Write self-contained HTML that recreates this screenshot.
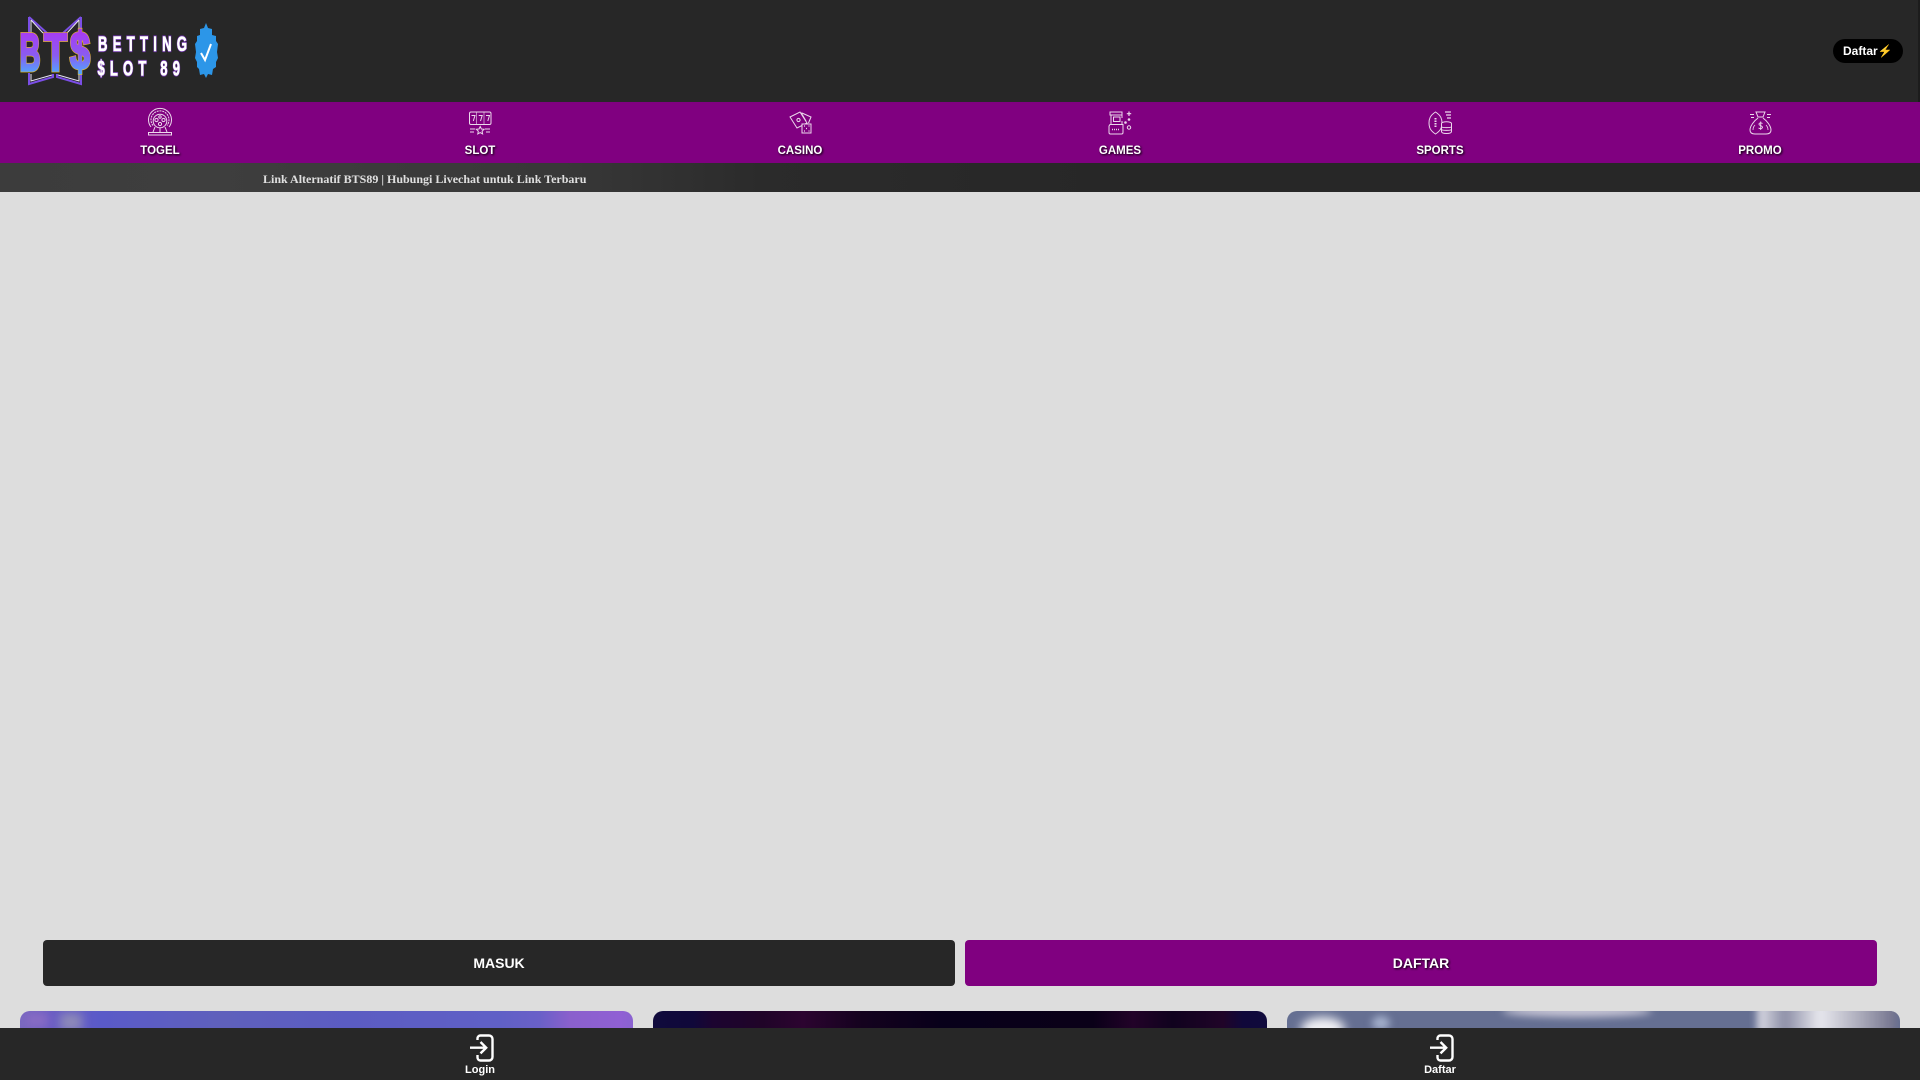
<!DOCTYPE html>
<html lang="id">
<head>
<meta charset="utf-8">
<title>BTS89</title>
<style>
html,body{margin:0;padding:0;width:1920px;height:1080px;overflow:hidden;background:#ddd;font-family:"Liberation Sans",Arial,sans-serif;}
.a{position:absolute;}
#hdr{left:0;top:0;width:1918px;height:102px;background:#272727;}
#edge{left:1918px;top:0;width:2px;height:102px;background:#1c1c1c;}
#pill{left:1833px;top:39px;width:70px;height:24px;border-radius:12px;background:#000;color:#fff;font-size:12px;font-weight:bold;line-height:24px;white-space:nowrap;}
#pill span{position:absolute;left:10px;top:0;}
#nav{left:0;top:102px;width:1920px;height:61px;background:#800080;}
.lab{position:absolute;top:143px;width:320px;text-align:center;color:#fff;font-size:11.5px;font-weight:bold;line-height:16px;text-shadow:1px 1px 2px #000;}
.ic{position:absolute;top:107px;width:30px;height:30px;fill:none;stroke:#fff;stroke-width:1;opacity:.85;}
#mq{left:0;top:163px;width:1920px;height:29px;background:linear-gradient(90deg,#3c3c3c 0,#3e3e3e 200px,#383838 560px,#2b2b2b 760px,#272727 1100px,#272727 100%);}
#mqt{left:263px;top:170px;color:#e0e0e0;font:bold 12px/18px "Liberation Serif",serif;white-space:nowrap;}
.btn{position:absolute;top:940px;height:46px;border-radius:4px;color:#fff;text-align:center;font-size:14px;font-weight:bold;line-height:46px;}
.card{position:absolute;top:1011px;height:60px;border-radius:10px;overflow:hidden;}
#bar{left:0;top:1028px;width:1920px;height:52px;background:#272727;}
.bl{position:absolute;top:1062px;width:120px;text-align:center;color:#fff;font-size:11px;font-weight:bold;line-height:16px;}
.door{position:absolute;top:1030px;width:34px;height:36px;fill:none;stroke:#fff;stroke-width:2.4;}
</style>
</head>
<body>
<div class="a" id="hdr"></div>
<div class="a" id="edge"></div>

<svg class="a" style="left:0;top:0" width="240" height="102" viewBox="0 0 240 102">
<defs>
<linearGradient id="g" x1="0" y1="33" x2="0" y2="74" gradientUnits="userSpaceOnUse">
<stop offset="0" stop-color="#a63df2"/><stop offset=".55" stop-color="#8a5cf0"/><stop offset="1" stop-color="#4fa8ff"/>
</linearGradient>
</defs>
<g fill="none" stroke-linejoin="miter">
<path d="M29 17V33M29 17L47 33M81 17V33M81 17L63 33M29 73V84L53 77V74M81 73V84L57 77V74" stroke="#7b4ee6" stroke-width="2"/>
<path d="M31 20L43 33M31 20V33M79 20L67 33M79 20V33M31 74V81L52 75M79 74V81L58 75" stroke="#e8e4f5" stroke-width="1"/>
</g>
<g font-family="'Liberation Sans',sans-serif" font-weight="bold" fill="#f2c21a" stroke="#f2c21a" stroke-width="3.800" stroke-linejoin="miter">
<text x="19.500" y="70.500" font-size="53" textLength="21" lengthAdjust="spacingAndGlyphs">B</text>
<text x="44" y="70.500" font-size="53" textLength="23" lengthAdjust="spacingAndGlyphs">T</text>
<text x="70" y="69" font-size="53" textLength="20" lengthAdjust="spacingAndGlyphs">$</text>
</g>
<g font-family="'Liberation Sans',sans-serif" font-weight="bold" fill="url(#g)" stroke="url(#g)" stroke-width="2.600" stroke-linejoin="miter">
<text x="19.500" y="70.500" font-size="53" textLength="21" lengthAdjust="spacingAndGlyphs">B</text>
<text x="44" y="70.500" font-size="53" textLength="23" lengthAdjust="spacingAndGlyphs">T</text>
<text x="70" y="69" font-size="53" textLength="20" lengthAdjust="spacingAndGlyphs">$</text>
</g>
<g font-family="'Liberation Sans',sans-serif" font-weight="bold" fill="#fff" stroke="#6b2fa8" stroke-width="2.200" style="paint-order:stroke" font-size="21">
<text transform="translate(98 51) scale(.62 1)" textLength="143.500">BETTING</text>
<text transform="translate(97.500 75.500) scale(.62 1)" textLength="133">$LOT 89</text>
</g>
<g font-family="'Liberation Sans',sans-serif" font-weight="bold" fill="#fff" stroke="#fff" stroke-width=".6" font-size="21">
<text transform="translate(98 51) scale(.62 1)" textLength="143.500">BETTING</text>
<text transform="translate(97.500 75.500) scale(.62 1)" textLength="133">$LOT 89</text>
</g>
<polygon fill="#2c96e8" points="206,23 208,28 212,29 212,35 216,36 216,41 218,44 217,52 218,58 216,62 216,67 213,69 212,75 208,74 206,78 204,74 200,75 199,69 197,67 197,62 195,58 196,52 195,44 197,41 197,36 200,35 200,29 204,28"/>
<path d="M201 53L205 60L211 44" fill="none" stroke="#fff" stroke-width="2"/>
</svg>

<div class="a" id="pill"><span>Daftar⚡</span></div>

<div class="a" id="nav"></div>

<!-- TOGEL -->
<svg class="ic" style="left:145px" viewBox="0 0 30 30">
<path d="M6 20A11.500 11.500 0 1 1 24 20"/><path d="M8 18.500A9 9 0 1 1 22 18.500" stroke-dasharray="2 .8"/>
<circle cx="15" cy="14" r="6.800"/><circle cx="11.500" cy="13" r="1.600"/><circle cx="18.500" cy="13" r="1.600"/><circle cx="15" cy="17" r="1.600"/><circle cx="15" cy="10" r="1.200"/>
<path d="M10 20L8 25M20 20L22 25M15 21V25"/><rect x="3.500" y="25.500" width="23" height="2.500"/>
</svg>
<!-- SLOT -->
<svg class="ic" style="left:465px" viewBox="0 0 30 30">
<rect x="4.500" y="5" width="21.500" height="12.500" rx="1.500"/>
<path d="M11.500 5V17.500M19 5V17.500" stroke-width=".6"/>
<path d="M6.500 8.500H10L8.300 14M13.700 8.500H17.200L15.500 14M21 8.500H24.500L22.800 14"/>
<path d="M15.200 19.500l1.200 2.500 2.700.3-2 1.900.5 2.700-2.400-1.300-2.400 1.300.5-2.700-2-1.900 2.700-.3z"/>
<path d="M5 22H10M20 22H25M5 25H9M21 25H25"/>
</svg>
<!-- CASINO -->
<svg class="ic" style="left:785px" viewBox="0 0 30 30">
<path d="M5 10L15 5L22 16L12 21Z"/><path d="M17 6L26 10L23.500 16M16 5.500L21 14"/>
<circle cx="13.500" cy="13" r="1.600"/>
<rect x="17" y="17" width="9" height="9" fill="#800080"/>
<path d="M19 19h1M23.500 19h1M21 21.500h1M19 24h1M23.500 24h1" stroke-width="1.200"/>
</svg>
<!-- GAMES -->
<svg class="ic" style="left:1105px" viewBox="0 0 30 30">
<path d="M5 5H17V8H5Z"/><path d="M6 8V17M17 8V11M17 14V17"/>
<rect x="8.500" y="10" width="6.500" height="4.500"/>
<path d="M5 17.500H18V25.500a1.500 1.500 0 0 1-1.500 1.500H5.500a1.500 1.500 0 0 1-1.500-1.500V19Z"/>
<path d="M7 22.500H15" stroke-dasharray="1 1" stroke-width="1.400"/>
<path d="M24 4.500V9M21.800 6.700H26.200" stroke-width="1.200"/>
<circle cx="24" cy="12.500" r=".8" fill="#fff"/><circle cx="20.500" cy="15.500" r=".8" fill="#fff"/><circle cx="24" cy="20.500" r="1.700"/>
</svg>
<!-- SPORTS -->
<svg class="ic" style="left:1425px" viewBox="0 0 30 30">
<path d="M10.500 5C5 8.500 4 12 4 16S5 23.500 10.500 27C16 23.500 17 20 17 16S16 8.500 10.500 5Z"/>
<path d="M10.500 11V21" stroke-width="2" stroke-dasharray="1.500 1"/>
<path d="M20 5H26M21 8H26M22 11H26" stroke-width="1.300"/>
<ellipse cx="21.500" cy="16.500" rx="5" ry="1.800" fill="#800080"/>
<path d="M16.500 16.500V24.500C16.500 26 19 26.500 21.500 26.500S26.500 26 26.500 24.500V16.500M16.500 19.500C16.500 21 26.500 21 26.500 19.500M16.500 22.200C16.500 23.700 26.500 23.700 26.500 22.200" fill="#800080"/>
</svg>
<!-- PROMO -->
<svg class="ic" style="left:1745px" viewBox="0 0 30 30">
<path d="M11 5H20L18 10H13Z"/><path d="M12.500 10H18.500"/>
<path d="M13 11C9 14 5 19 5 23C5 26 7.500 27 10 27H21C23.500 27 26 26 26 23C26 19 22 14 18 11"/>
<path d="M8 23C8 21 9 19 10 18M23 23C23 21 22 19 21 18" stroke-width=".8"/>
<path d="M17.500 16.500C16 15.500 14 15.800 14 17.200S17.500 18.800 17.500 20.300S15 22 13.500 21M15.700 14.500V23" stroke-width=".9"/>
<path d="M5 7.500H9M6 10.500H9M22 7.500H26M22 10.500H25"/>
</svg>

<div class="lab" style="left:0">TOGEL</div>
<div class="lab" style="left:320px">SLOT</div>
<div class="lab" style="left:640px">CASINO</div>
<div class="lab" style="left:960px">GAMES</div>
<div class="lab" style="left:1280px">SPORTS</div>
<div class="lab" style="left:1600px">PROMO</div>

<div class="a" id="mq"></div>
<div class="a" id="mqt">Link Alternatif BTS89 | Hubungi Livechat untuk Link Terbaru</div>

<div class="btn" style="left:43px;width:912px;background:#272727">MASUK</div>
<div class="btn" style="left:965px;width:912px;background:#800080;text-shadow:1px 1px 2px #000">DAFTAR</div>

<div class="card" style="left:20px;width:613px;background:linear-gradient(90deg,#7a68c0 0,#6a5cc4 30px,#5a5ac8 80px,#5f60bc 200px,#5b5cc2 330px,#6060c6 480px,#6a60c8 520px,#8a60cc 550px,#9060d4 600px,#8a62d0 100%)">
<div class="a" style="left:40px;top:2px;width:22px;height:18px;background:#8e8ab8;filter:blur(5px)"></div>
<div class="a" style="left:6px;top:2px;width:22px;height:14px;background:#8a6cc4;filter:blur(5px)"></div>
</div>
<div class="card" style="left:653px;width:614px;background:linear-gradient(90deg,#100a3c 0,#10083a 40px,#1c0430 60px,#200428 110px,#2c0430 150px,#14021e 210px,#08001a 290px,#0a0018 440px,#220228 480px,#10021e 520px,#200428 570px,#10083a 590px,#100a3c 100%)"></div>
<div class="card" style="left:1287px;width:613px;background:#656f92">
<div class="a" style="left:14px;top:6px;width:44px;height:24px;border-radius:50%;background:#f0f0f4;filter:blur(5px)"></div>
<div class="a" style="left:85px;top:5px;width:18px;height:14px;border-radius:50%;background:#a4b0cc;filter:blur(4px)"></div>
<div class="a" style="left:215px;top:-6px;width:150px;height:12px;border-radius:50%;background:#c8c6d6;filter:blur(4px)"></div>
<div class="a" style="left:470px;top:-8px;width:140px;height:32px;background:linear-gradient(90deg,#e0e0e8 0,#8c8ea6 20%,#e8e8ee 45%,#a8a8b8 75%,#70708a 100%);filter:blur(4px)"></div>
</div>

<div class="a" id="bar"></div>
<svg class="door" style="left:465px" viewBox="0 0 34 36">
<path d="M12.500 10V8.500a3 3 0 0 1 3-3H24a3.500 3.500 0 0 1 3.500 3.500V27a3.500 3.500 0 0 1-3.500 3.500h-8.500a3 3 0 0 1-3-3V25"/>
<path d="M5 17.700H21M15.500 12l5.700 5.700-5.700 5.700"/>
</svg>
<svg class="door" style="left:1425px" viewBox="0 0 34 36">
<path d="M12.500 10V8.500a3 3 0 0 1 3-3H24a3.500 3.500 0 0 1 3.500 3.500V27a3.500 3.500 0 0 1-3.500 3.500h-8.500a3 3 0 0 1-3-3V25"/>
<path d="M5 17.700H21M15.500 12l5.700 5.700-5.700 5.700"/>
</svg>
<div class="bl" style="left:420px">Login</div>
<div class="bl" style="left:1380px">Daftar</div>
</body>
</html>
